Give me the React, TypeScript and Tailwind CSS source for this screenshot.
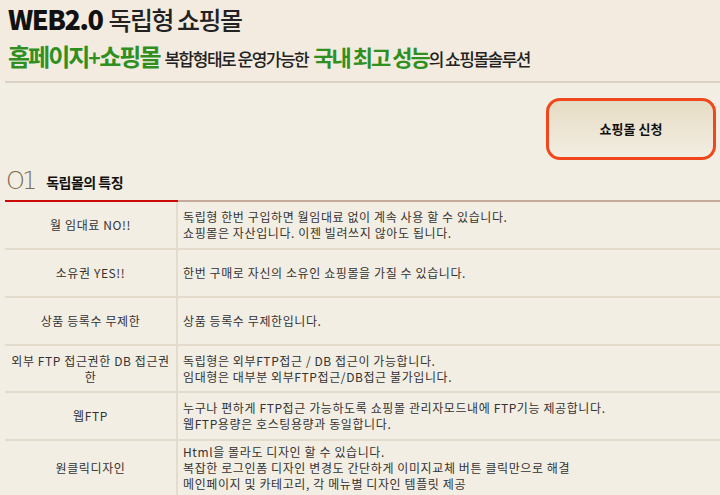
const rows: { label: string[]; lines: string[]; h: string }[] = [
  { label: ["월 임대료 NO!!"], lines: ["독립형 한번 구입하면 월임대료 없이 계속 사용 할 수 있습니다.", "쇼핑몰은 자산입니다. 이젠 빌려쓰지 않아도 됩니다."], h: "h-[48px]" },
  { label: ["소유권 YES!!"], lines: ["한번 구매로 자신의 소유인 쇼핑몰을 가질 수 있습니다."], h: "h-[48px]" },
  { label: ["상품 등록수 무제한"], lines: ["상품 등록수 무제한입니다."], h: "h-[48px]" },
  { label: ["외부 FTP 접근권한 DB 접근권", "한"], lines: ["독립형은 외부FTP접근 / DB 접근이 가능합니다.", "임대형은 대부분 외부FTP접근/DB접근 불가입니다."], h: "h-[47px]" },
  { label: ["웹FTP"], lines: ["누구나 편하게 FTP접근 가능하도록 쇼핑몰 관리자모드내에 FTP기능 제공합니다.", "웹FTP용량은 호스팅용량과 동일합니다."], h: "h-[48px]" },
  { label: ["원클릭디자인"], lines: ["Html을 몰라도 디자인 할 수 있습니다.", "복잡한 로그인폼 디자인 변경도 간단하게 이미지교체 버튼 클릭만으로 해결", "메인페이지 및 카테고리, 각 메뉴별 디자인 템플릿 제공"], h: "h-[56px]" },
];

export default function App() {
  return (
    <div
      className="w-[720px] h-[495px] overflow-hidden bg-[#f3eee3] text-[#333]"
      style={{ fontFamily: '"Noto Sans CJK KR", "Noto Sans", sans-serif' }}
    >
      {/* header */}
      <div className="h-[81px] pl-[8px] pt-[2px] bg-[#f3ebdf]">
        <div className="leading-[34px] tracking-[-1.5px] whitespace-nowrap">
          <span className="text-[27px] font-black text-[#111]">WEB2.0</span>
          <span className="ml-[6px] text-[25px] font-medium text-[#222]">독립형 쇼핑몰</span>
        </div>
        <div className="leading-[32px] tracking-[-1.5px] whitespace-nowrap">
          <span className="text-[24px] font-bold text-[#2f8f1f] tracking-[-2px]">홈페이지</span>
          <span className="text-[21px] font-bold text-[#2f8f1f]">+</span>
          <span className="text-[24px] font-bold text-[#2f8f1f] tracking-[-2px]">쇼핑몰</span>
          <span className="ml-[5px] text-[17px] font-medium text-[#222]">복합형태로 운영가능한</span>
          <span className="ml-[5px] text-[22px] font-bold text-[#2f8f1f] tracking-[-2px]">국내 최고 성능</span>
          <span className="text-[17px] font-medium text-[#222]">의 쇼핑몰솔루션</span>
        </div>
      </div>
      <div className="ml-[5px] h-[2px] bg-[#d9d3c6]" />

      {/* button */}
      <div className="flex justify-end pr-[4px] pt-[15px]">
        <button className="w-[170px] h-[62px] rounded-[14px] border-[3px] border-[#f0481c] bg-gradient-to-b from-[#e6dcc4] to-[#f3eee3] text-[13px] font-bold text-[#111]">
          쇼핑몰 신청
        </button>
      </div>

      {/* section title */}
      <div className="flex items-end pl-[6px] mt-[8px] h-[24px]">
        <span className="text-[24px] leading-[22px] font-light text-[#7d6c4e] tracking-[-3px]" style={{ fontFamily: '"DejaVu Sans", sans-serif' }}>
          O1
        </span>
        <span className="ml-[12px] mb-[1px] text-[14px] leading-[18px] font-bold text-[#111] tracking-[-0.5px]">독립몰의 특징</span>
      </div>

      {/* table */}
      <div className="ml-[5px] mt-[8px]">
        <div className="flex h-[2px]">
          <div className="w-[173px] bg-[#cc0a0a]" />
          <div className="flex-1 bg-[#c4ab9b]" />
        </div>
        {rows.map((r, i) => (
          <div key={i} className={`flex ${r.h} border-b-2 border-[#e3dccd] text-[12px] leading-[16px] tracking-[0.6px] text-[#333]`}>
            <div className="w-[173px] shrink-0 flex flex-col items-center justify-center text-center border-r-2 border-[#e3dccd]">
              {r.label.map((l, j) => (
                <div key={j}>{l}</div>
              ))}
            </div>
            <div className="flex-1 flex flex-col justify-center pl-[5px] whitespace-nowrap">
              {r.lines.map((l, j) => (
                <div key={j}>{l}</div>
              ))}
            </div>
          </div>
        ))}
      </div>
    </div>
  );
}
